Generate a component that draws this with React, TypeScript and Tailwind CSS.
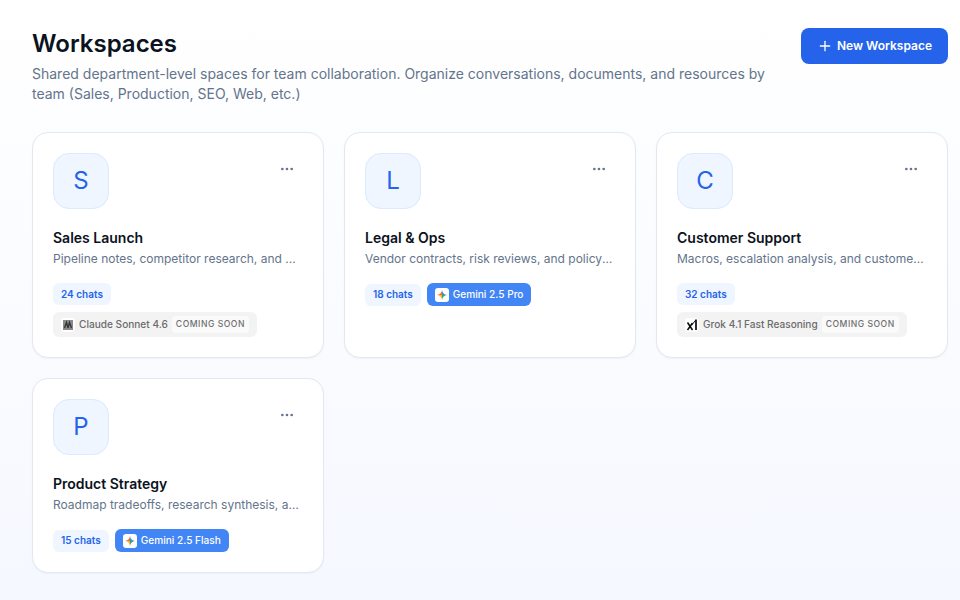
import { Plus, MoreHorizontal } from "lucide-react";

type Model = { name: string; kind: "claude" | "grok" | "gemini"; soon?: boolean };

type Workspace = {
  letter: string;
  title: string;
  description: string;
  chats: number;
  model: Model;
};

const workspaces: Workspace[] = [
  {
    letter: "S",
    title: "Sales Launch",
    description: "Pipeline notes, competitor research, and ...",
    chats: 24,
    model: { name: "Claude Sonnet 4.6", kind: "claude", soon: true },
  },
  {
    letter: "L",
    title: "Legal & Ops",
    description: "Vendor contracts, risk reviews, and policy updates for the team.",
    chats: 18,
    model: { name: "Gemini 2.5 Pro", kind: "gemini" },
  },
  {
    letter: "C",
    title: "Customer Support",
    description: "Macros, escalation analysis, and customer feedback themes.",
    chats: 32,
    model: { name: "Grok 4.1 Fast Reasoning", kind: "grok", soon: true },
  },
  {
    letter: "P",
    title: "Product Strategy",
    description: "Roadmap tradeoffs, research synthesis, and launch planning.",
    chats: 15,
    model: { name: "Gemini 2.5 Flash", kind: "gemini" },
  },
];

function GeminiMark() {
  return (
    <svg viewBox="0 0 12 12" className="size-[10px]">
      <path d="M6 6 L6 0 Q5.2 5.2 0 6 Z" fill="#f06a3c" />
      <path d="M6 6 L6 0 Q6.8 5.2 12 6 Z" fill="#4285f4" />
      <path d="M6 6 L0 6 Q5.2 6.8 6 12 Z" fill="#f5b92e" />
      <path d="M6 6 L12 6 Q6.8 6.8 6 12 Z" fill="#34a853" />
    </svg>
  );
}

function ClaudeMark() {
  return (
    <span className="flex size-[10px] items-center justify-center bg-[#8a8a8a]">
      <svg viewBox="0 0 10 10" className="size-[10px]">
        <path d="M1.5 8 L3.5 2.5 L5 8 M5 8 L6.5 2.5 L8.5 8" fill="none" stroke="#333333" strokeWidth="1.3" />
      </svg>
    </span>
  );
}

function GrokMark() {
  return (
    <svg viewBox="0 0 12 12" className="size-3">
      <path d="M1.5 3.5 L6.5 11 M6.5 4 L1.5 11" fill="none" stroke="#0a0a0a" strokeWidth="1.5" />
      <path d="M10 0.5 L10 11" fill="none" stroke="#0a0a0a" strokeWidth="1.7" />
      <path d="M9.8 1 L5.8 6" fill="none" stroke="#0a0a0a" strokeWidth="1" />
    </svg>
  );
}

function ModelBadge({ model }: { model: Model }) {
  if (model.kind === "gemini") {
    return (
      <span className="inline-flex h-[23px] items-center gap-1 rounded-md bg-[#4285f4] px-2 text-[10.1px] font-medium text-white">
        <span className="flex size-[14px] items-center justify-center rounded-[3px] bg-white">
          <GeminiMark />
        </span>
        {model.name}
      </span>
    );
  }

  return (
    <span className="inline-flex h-[25px] items-center gap-1 self-start rounded-md bg-[#f3f3f3] px-2 text-[10.1px] font-medium text-[#6b6b6b]">
      <span className="flex size-[14px] items-center justify-center rounded-[3px] bg-white">
        {model.kind === "claude" ? <ClaudeMark /> : <GrokMark />}
      </span>
      {model.name}
      <span className="flex h-[17px] items-center rounded bg-[#fafafa] px-1 text-[8.6px] font-medium tracking-[0.5px] text-[#6f6f6f]">
        COMING SOON
      </span>
    </span>
  );
}

function WorkspaceCard({ workspace }: { workspace: Workspace }) {
  const { model } = workspace;
  const inline = model.kind === "gemini";

  return (
    <article className="rounded-2xl border border-[#e2e8f0] bg-white p-5 shadow-[0_1px_2px_rgba(15,23,42,0.04)]">
      <div className="flex items-start justify-between">
        <span className="flex size-14 items-center justify-center rounded-2xl border border-[#dbeafe] bg-[#eff6ff] text-2xl text-[#2563eb]">
          {workspace.letter}
        </span>
        <button type="button" className="mr-2 mt-[8px] flex text-[#64748b]">
          <MoreHorizontal size={16} strokeWidth={2} />
        </button>
      </div>
      <h3 className="mt-[19px] text-sm font-semibold leading-5 text-[#0b1220]">{workspace.title}</h3>
      <p className="mt-[3px] line-clamp-1 text-xs leading-4 text-[#64748b]">{workspace.description}</p>
      <div className={inline ? "mt-4 flex items-center gap-1.5" : "mt-4 flex flex-col items-start gap-[7px]"}>
        <span className="flex h-[22px] items-center rounded-md bg-[#eff6ff] px-2 text-[10px] font-semibold text-[#2563eb]">
          {workspace.chats} chats
        </span>
        <ModelBadge model={model} />
      </div>
    </article>
  );
}

export default function App() {
  return (
    <div className="min-h-[600px] bg-gradient-to-b from-white to-[#f5f8ff] pb-[26px] pl-8 pr-3 pt-7 font-['Inter',sans-serif]">
      <header className="flex items-start justify-between">
        <div className="w-[745px]">
          <h1 className="text-2xl font-semibold leading-8 text-[#0b1220]">Workspaces</h1>
          <p className="mt-1 text-sm leading-5 text-[#64748b]">
            Shared department-level spaces for team collaboration. Organize conversations, documents, and resources by
            team (Sales, Production, SEO, Web, etc.)
          </p>
        </div>
        <button
          type="button"
          className="flex h-9 w-[147px] items-center justify-center gap-1 rounded-lg bg-[#2563eb] text-xs font-semibold text-white"
        >
          <Plus size={16} strokeWidth={2} />
          New Workspace
        </button>
      </header>
      <div className="mt-7 grid grid-cols-3 gap-5">
        {workspaces.map((workspace) => (
          <WorkspaceCard key={workspace.title} workspace={workspace} />
        ))}
      </div>
    </div>
  );
}
